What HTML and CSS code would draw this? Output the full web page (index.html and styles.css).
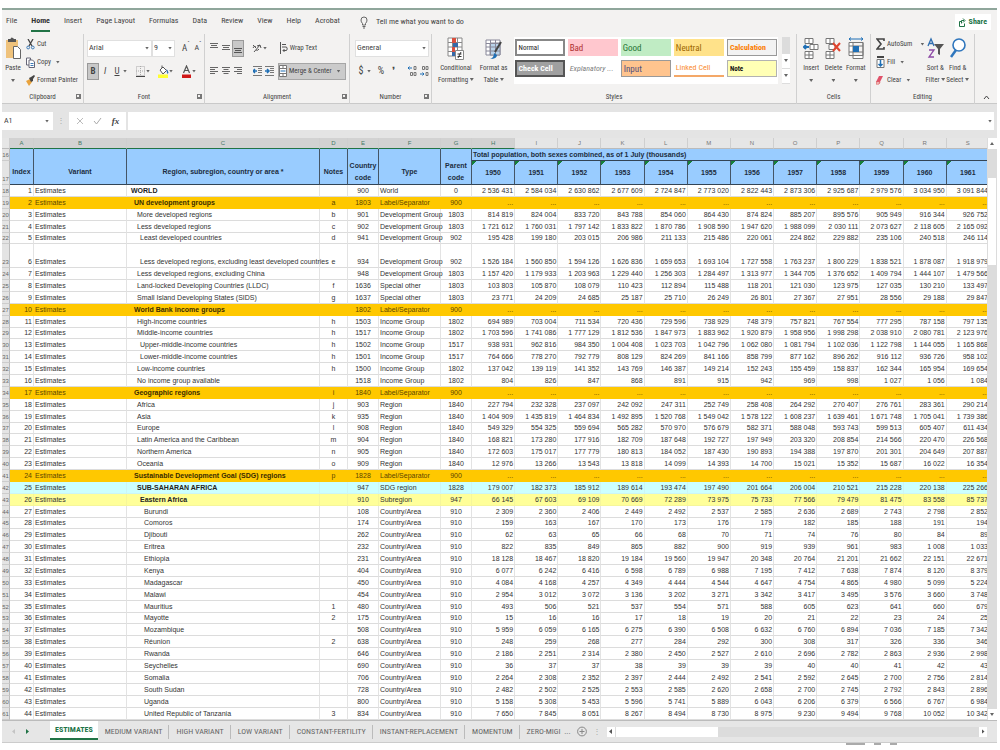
FILE: index.html
```html
<!DOCTYPE html>
<html lang="en">
<head>
<meta charset="utf-8">
<title>Population estimates</title>
<link rel="stylesheet" href="styles.css">
</head>
<body>
<div class="app">
<header class="ribbon">
  <nav class="menu">
    <button class="menu-tab">File</button>
    <button class="menu-tab active">Home</button>
    <button class="menu-tab">Insert</button>
    <button class="menu-tab">Page Layout</button>
    <button class="menu-tab">Formulas</button>
    <button class="menu-tab">Data</button>
    <button class="menu-tab">Review</button>
    <button class="menu-tab">View</button>
    <button class="menu-tab">Help</button>
    <button class="menu-tab">Acrobat</button>
    <button class="tell"><svg width="8" height="13" viewBox="0 0 8 13" fill="none" stroke="#666"><path d="M2.5 9V7.5Q1 6 1 4a3 3 0 0 1 6 0Q7 6 5.500 7.500V9zM2.500 10.500h3M3 12h2"/></svg>Tell me what you want to do</button>
    <button class="share"><svg width="7" height="9" viewBox="0 0 7 9" fill="none" stroke="#217346"><path d="M2 3.500H.5v5h5v-3M2.500 5.500V2.500H5M4 .5l2 2-2 2"/></svg>Share</button>
  </nav>
  <div class="groups">
    <section class="group">
      <div class="group-body clip">
        <button class="big"><svg width="16" height="24" viewBox="0 0 16 24"><path fill="#efc27b" d="M1 3h12v18H1z"/><path fill="#555" d="M3 2h2.500Q6-.5 8 1l1 1h2v3H3z"/><path fill="#fff" stroke="#666" d="M8.500 9.500h4l3 3v9h-7z"/></svg>Paste<i class="dd"></i></button>
        <div class="stack">
          <button class="row"><svg width="9" height="11" viewBox="0 0 9 11" fill="none"><path stroke="#444" stroke-width="1.300" d="M2 0l4 7M7 0L3 7"/><path stroke="#3b78b5" d="M.8 8.500a1.400 1.400 0 1 0 2.800 0 1.400 1.400 0 1 0-2.800 0M5.400 8.500a1.400 1.400 0 1 0 2.800 0 1.400 1.400 0 1 0-2.800 0"/></svg>Cut</button>
          <button class="row"><svg width="9" height="11" viewBox="0 0 9 11" fill="#fff" stroke="#667"><path d="M.5 1h4v7h-4z"/><path d="M3 3h3.500L8.500 5v5.500H3z"/><path stroke="#3b78b5" d="M4.500 6.500h3M4.500 8.500h3"/></svg>Copy <i class="dd"></i></button>
          <button class="row"><svg width="9" height="11" viewBox="0 0 9 11"><path fill="#e9a33d" d="M0 6l4-2 2 3-3 4z"/><path fill="#444" d="M3 3l2-1 3-2 1 1-2 3v2L5 7z"/></svg>Format Painter</button>
        </div>
      </div>
      <footer class="group-name">Clipboard<i class="launch"></i></footer>
    </section>
    <section class="group">
      <div class="group-body font">
        <div class="line">
          <span class="combo wide"><input aria-label="Font" value="Arial"><i class="dd"></i></span>
          <span class="combo"><input aria-label="Font size" value="9"><i class="dd"></i></span>
          <button class="tool grow">A<sup>ˆ</sup></button><button class="tool shrink">A<sup>ˇ</sup></button>
        </div>
        <div class="line">
          <button class="tool on bold">B</button><button class="tool ital">I</button><button class="tool under">U</button><i class="dd"></i>
          <button class="tool sep"><svg width="9" height="11" viewBox="0 0 9 11" fill="none" stroke="#aaa" stroke-dasharray="1 1"><path d="M.5.5h8v9h-8zM4.500 0v10M0 5h9"/><path stroke="#444" stroke-dasharray="none" d="M0 10.500h9"/></svg></button><i class="dd"></i>
          <button class="tool sep"><svg width="11" height="13" viewBox="0 0 11 13"><path fill="#fff" stroke="#555" d="M2 5l3-3 3.500 3.500L5 9zM4 3V.5"/><path fill="#2f6eb0" d="M8.500 4q3 3 1 5-1-1-1-5"/><path fill="#ff3" d="M0 9.500h10V13H0z"/></svg></button><i class="dd"></i>
          <button class="tool sep"><svg width="9" height="13" viewBox="0 0 9 13"><path fill="none" stroke="#555" stroke-width="1.200" d="M1.500 8l3-7 3 7M2.500 5.500h4"/><path fill="#d01818" d="M0 9.500h9V13H0z"/></svg></button><i class="dd"></i>
        </div>
      </div>
      <footer class="group-name">Font<i class="launch"></i></footer>
    </section>
    <section class="group">
      <div class="group-body align">
        <div class="line">
          <button class="tool"><svg width="8" height="12" viewBox="0 0 8 12" stroke="#666"><path d="M0 1.500h8M1 3.500h6M0 5.500h8"/></svg></button>
          <button class="tool"><svg width="8" height="12" viewBox="0 0 8 12" stroke="#666"><path d="M0 3.500h8M1 5.500h6M0 7.500h8"/></svg></button>
          <button class="tool on"><svg width="8" height="12" viewBox="0 0 8 12" stroke="#555"><path d="M0 6.500h8M1 8.500h6M0 10.500h8"/></svg></button>
          <button class="tool sep"><svg width="10" height="12" viewBox="0 0 10 12" fill="none" stroke="#555"><path d="M2 10L8 3M8 3l1 3M8 3L5 4M1 3l3 3M1 6q1-3 3-1M4 8q2 1 3-1"/></svg></button><i class="dd"></i>
          <button class="row wrap"><svg width="8" height="12" viewBox="0 0 8 12" fill="none" stroke="#555"><path d="M.5 0v12M2 2.500h4M2 5h4.500q1.500 2 0 3.500H3M4.500 7L3 8.500 4.500 10"/></svg>Wrap Text</button>
        </div>
        <div class="line">
          <button class="tool"><svg width="8" height="10" viewBox="0 0 8 10" stroke="#666"><path d="M0 1.500h8M0 3.500h5M0 5.500h8M0 7.500h5"/></svg></button>
          <button class="tool"><svg width="8" height="10" viewBox="0 0 8 10" stroke="#666"><path d="M0 1.500h8M1.500 3.500h5M0 5.500h8M1.500 7.500h5"/></svg></button>
          <button class="tool"><svg width="8" height="10" viewBox="0 0 8 10" stroke="#666"><path d="M0 1.500h8M3 3.500h5M0 5.500h8M3 7.500h5"/></svg></button>
          <button class="tool sep"><svg width="9" height="12" viewBox="0 0 9 12" stroke="#777"><path d="M0 1.500h9M5 3.500h4M5 5.500h4M5 7.500h4M0 10.500h9"/><path stroke="#1f6fb5" stroke-width="1.500" fill="none" d="M4 6H0M2 4L0 6l2 2"/></svg></button>
          <button class="tool"><svg width="9" height="12" viewBox="0 0 9 12" stroke="#777"><path d="M0 1.500h9M5 3.500h4M5 5.500h4M5 7.500h4M0 10.500h9"/><path stroke="#1f6fb5" stroke-width="1.500" fill="none" d="M0 6h4M2 4l2 2-2 2"/></svg></button>
          <button class="row merge"><svg width="8" height="12" viewBox="0 0 8 12" fill="#fff" stroke="#777"><path d="M.5.5h7v11h-7zM.5 3.500h7M.5 8.500h7M4 .5v3M4 8.500v3"/><path stroke="#1f6fb5" d="M1.500 6h5"/></svg>Merge &amp; Center <i class="dd"></i></button>
        </div>
      </div>
      <footer class="group-name">Alignment<i class="launch"></i></footer>
    </section>
    <section class="group">
      <div class="group-body number">
        <div class="line"><span class="combo full"><input aria-label="Number format" value="General"><i class="dd"></i></span></div>
        <div class="line">
          <button class="tool sign">$</button><i class="dd"></i><button class="tool sign percent">%</button><button class="tool sign">❜</button>
          <button class="tool sep"><svg width="9" height="12" viewBox="0 0 9 12" fill="none" stroke="#777"><path stroke="#1f6fb5" d="M4 3H0M1.500 1.500L0 3l1.500 1.500"/><path d="M6 1.500h2v3H6zM2.500 7.500h2v3h-2zM6 7.500h2v3H6z"/></svg></button>
          <button class="tool"><svg width="9" height="12" viewBox="0 0 9 12" fill="none" stroke="#777"><path stroke="#1f6fb5" d="M0 9h4M2.500 7.500L4 9l-1.500 1.500"/><path d="M2.500 1.500h2v3h-2zM6 1.500h2v3H6zM6 7.500h2v3H6z"/></svg></button>
        </div>
      </div>
      <footer class="group-name">Number<i class="launch"></i></footer>
    </section>
    <section class="group">
      <div class="group-body styles">
        <button class="big"><svg width="17" height="24" viewBox="0 0 17 24" fill="#fff" stroke="#888"><path d="M1 1h14v18H1zM1 5.500h14M1 10h14M1 14.500h14M5.500 1v18M10.500 1v18"/><path fill="#d9503f" stroke="none" d="M5 1h4v5H5zM5 10h3v5H5z"/><path fill="#3669a8" stroke="none" d="M6 6h5v4H6zM5 15h5v4H5z"/><path d="M8.500 13.500h8v9h-8z"/><path stroke="#333" d="M10.500 17h4M10.500 19.500h4M14 15l-3 6"/></svg><span>Conditional<br>Formatting <i class="dd"></i></span></button>
        <button class="big"><svg width="17" height="24" viewBox="0 0 17 24" fill="#fff" stroke="#889"><path d="M1 3h14v15H1z"/><path fill="#b9d3ea" d="M5 6h10v12H5z"/><path d="M1 6.500h14M1 10h14M1 14h14M5.500 3v15M10.500 3v15"/><path stroke="#444" stroke-width="2" d="M16 5l-6 10"/><path fill="#1f6fb5" stroke="none" d="M5 22q4-1 4-6l3 2q0 4-7 4"/></svg><span>Format as<br>Table <i class="dd"></i></span></button>
        <div class="gallery">
          <button class="cs normal">Normal</button><button class="cs bad">Bad</button><button class="cs good">Good</button><button class="cs neutral">Neutral</button><button class="cs calc">Calculation</button>
          <button class="cs check">Check Cell</button><button class="cs expl">Explanatory ...</button><button class="cs input">Input</button><button class="cs linked">Linked Cell</button><button class="cs note">Note</button>
        </div>
        <div class="spin"><button aria-label="Scroll up"></button><button aria-label="Scroll down"><i class="dd"></i></button><button aria-label="More"><i class="dd"></i></button></div>
      </div>
      <footer class="group-name">Styles</footer>
    </section>
    <section class="group">
      <div class="group-body cells">
        <button class="big"><svg width="16" height="24" viewBox="0 0 16 24" fill="#fff" stroke="#777"><path d="M2 1.500h8v5H2zM6 1.500v5M2 14.500h8v7H2zM6 14.500v7M2 18h8M7 7.500h8v5H7zM11 7.500v5"/><path stroke="#1f6fb5" stroke-width="2" d="M6 10H1M3 8l-2 2 2 2"/></svg>Insert<i class="dd"></i></button>
        <button class="big"><svg width="16" height="24" viewBox="0 0 16 24" fill="#fff" stroke="#777"><path d="M1 1.500h8v5H1zM5 1.500v5M1 14.500h8v7H1zM5 14.500v7M1 18h8M4 7.500h6v5H4z"/><path stroke="#e0452f" stroke-width="2" d="M8 6l7 8M15 6l-7 8"/></svg>Delete<i class="dd"></i></button>
        <button class="big"><svg width="16" height="24" viewBox="0 0 16 24" fill="#fff" stroke="#777"><path d="M1 5.500h14v13H1zM1 9h14M1 15h14M5 5.500v16h10v-16"/><path fill="#1f6fb5" stroke="none" d="M5 9h6v6H5z"/><path stroke="#1f6fb5" d="M1 2h14M3 .5L1 2l2 1.500M13 .5L15 2l-2 1.500"/></svg>Format<i class="dd"></i></button>
      </div>
      <footer class="group-name">Cells</footer>
    </section>
    <section class="group">
      <div class="group-body edit">
        <div class="stack">
          <button class="row"><svg width="9" height="12" viewBox="0 0 9 12" fill="none" stroke="#444" stroke-width="1.600"><path d="M8 3V1H1l4 5-4 5h7V9"/></svg>AutoSum &nbsp;<i class="dd"></i></button>
          <button class="row"><svg width="9" height="12" viewBox="0 0 9 12" fill="#fff" stroke="#777"><path d="M1 3.500h7v8H1z"/><path stroke="#444" stroke-width="2" d="M1 1h7"/><path fill="none" stroke="#1f6fb5" stroke-width="1.500" d="M4.500 4v6M2.500 8l2 2 2-2"/></svg>Fill <i class="dd"></i></button>
          <button class="row"><svg width="9" height="12" viewBox="0 0 9 12"><path fill="#e0526a" d="M0 8l3-6h4L4 8z"/><path fill="#fff" stroke="#d66" d="M0 8h4l-1 2H0z"/></svg>Clear <i class="dd"></i></button>
        </div>
        <button class="big"><svg width="17" height="24" viewBox="0 0 17 24" fill="none"><path stroke="#2f6eb0" stroke-width="1.300" d="M1 9l3-7 3 7M2 6.500h4"/><path stroke="#8d4aa5" stroke-width="1.300" d="M2 13h5l-5 7h5"/><path fill="#555" d="M7 7h10l-4 5v6l-2-1v-5z"/></svg><span>Sort &amp;<br>Filter <i class="dd"></i></span></button>
        <button class="big"><svg width="16" height="24" viewBox="0 0 16 24" fill="#fff" stroke="#2f76bd" stroke-width="1.600"><circle cx="9" cy="8" r="6"/><path stroke-width="2.500" d="M6 13l-5 7"/></svg><span>Find &amp;<br>Select <i class="dd"></i></span></button>
      </div>
      <footer class="group-name">Editing</footer>
    </section>
    <button class="collapse" aria-label="Collapse ribbon"><svg width="7" height="5" viewBox="0 0 7 5" fill="none" stroke="#444"><path d="M1 4l2.500-3L6 4"/></svg></button>
  </div>
</header>
<div class="formula">
  <span class="name-box"><input aria-label="Name box" value="A1"><i class="dd"></i></span>
  <span class="grip">⋮</span>
  <span class="fx"><svg width="8" height="8" viewBox="0 0 8 8" stroke="#bbb"><path d="M1 1l6 6M7 1L1 7"/></svg><svg width="9" height="8" viewBox="0 0 9 8" fill="none" stroke="#aaa"><path d="M1 4l2.500 3L8 1"/></svg><b>fx</b></span>
  <span class="entry"><input aria-label="Formula"><i class="dd"></i></span>
</div>
<main class="sheet">
  <div class="view">
    <table class="grid">
      <colgroup><col class="w-row"><col class="w-a"><col class="w-b"><col class="w-c"><col class="w-d"><col class="w-e"><col class="w-f"><col class="w-g"><col span="12"></colgroup>
      <thead id="head"></thead>
      <tbody id="body"></tbody>
    </table>
  </div>
  <div class="vbar"><button aria-label="Up"><i class="dd up"></i></button><span class="vthumb"></span><button aria-label="Down"><i class="dd"></i></button></div>
</main>
<footer class="tabs">
  <div class="arrows"><i class="prev"></i><i class="next"></i></div>
  <button class="tab current">ESTIMATES</button>
  <button class="tab">MEDIUM VARIANT</button>
  <button class="tab">HIGH VARIANT</button>
  <button class="tab">LOW VARIANT</button>
  <button class="tab">CONSTANT-FERTILITY</button>
  <button class="tab">INSTANT-REPLACEMENT</button>
  <button class="tab">MOMENTUM</button>
  <button class="tab last">ZERO-MIGI &nbsp;...</button>
  <button class="add" aria-label="New sheet"><svg width="10" height="11" viewBox="0 0 10 11" fill="none" stroke="#888"><circle cx="5" cy="5.500" r="4.400"/><path d="M5 3v5M2.500 5.500h5"/></svg></button>
  <span class="grip">⋮</span>
  <div class="hbar"><button aria-label="Left"><i class="prev dark"></i></button><span class="hthumb"></span><button aria-label="Right"><i class="next grey"></i></button></div>
</footer>
<div class="status"><i></i><i></i><i></i></div>
</div>
<script src="grid.js"></script>
</body>
</html>
```
FILE: styles.css
```css
* { box-sizing: border-box; }
body { margin: 0; background: #fff; color: #444; font: 8px/10px "Roboto Condensed", Roboto, sans-serif; }
button, input { font: inherit; color: inherit; background: none; border: 0; padding: 0; margin: 0; white-space: nowrap; }
input { min-width: 0; width: 100%; }
svg { flex: none; display: block; }
.app { display: flex; flex-direction: column; height: 100vh; padding: 8px 3px 0 2px; }
.dd { display: inline-block; flex: none; width: 4px; height: 3px; background: #666; clip-path: polygon(0 0, 100% 0, 50% 100%); vertical-align: 1px; }
.up { transform: rotate(180deg); }

.ribbon { background: #f3f2f1; border-top: 2px solid #8fa69b; border-bottom: 1px solid #c9c9c9; }
.menu { display: flex; align-items: center; height: 24px; padding: 0 6px 0 4px; gap: 14px; }
.menu-tab { height: 20px; border-bottom: 2px solid transparent; }
.menu-tab.active { font-weight: bold; color: #333; border-color: #217346; }
.tell { display: flex; align-items: center; gap: 8px; padding-left: 6px; }
.share { display: flex; align-items: center; gap: 3px; margin-left: auto; height: 16px; padding: 0 4px; background: #fff; color: #217346; font-weight: bold; }
.groups { display: grid; grid-template-columns: 82px 121px 145px 82px 1fr 74px 104px 22px; height: 69px; }
.group { display: flex; flex-direction: column; border-right: 1px solid #d0d0d0; min-width: 0; }
.group-body { flex: 1; display: flex; min-height: 0; }
.group-name { display: flex; justify-content: center; align-items: center; position: relative; height: 14px; font-size: 7px; }
.launch { position: absolute; right: 2px; top: 4px; width: 5px; height: 5px; border: 1px solid #777; border-right-width: 2px; border-bottom-width: 2px; }
.big { display: flex; flex-direction: column; align-items: center; gap: 1px; line-height: 12px; padding-top: 3px; }
.big > .dd { margin-top: 4px; }
.big, .row { font-size: 7px; }
.stack { display: flex; flex-direction: column; gap: 6px; padding-top: 4px; }
.row { display: flex; align-items: center; gap: 2px; height: 12px; }
.row .dd { margin-left: 3px; }
.clip { gap: 5px; padding-left: 3px; }
.line { display: flex; align-items: center; height: 18px; }
.font, .align, .number { flex-direction: column; gap: 5px; padding-top: 5px; }
.combo { display: flex; align-items: center; background: #fff; border: 1px solid #e0e0e0; width: 23px; height: 17px; padding: 0 2px 0 1px; }
.wide { width: 65px; }
.full { width: 74px; }
.font { padding-left: 3px; }
.tool { display: flex; align-items: center; justify-content: center; min-width: 12px; height: 17px; }
.tool sup { font-size: 6px; line-height: 6px; align-self: flex-start; }
.grow { margin-left: 5px; font-size: 9px; }
.on { background: #c8c8c8; border: 1px solid #999; }
.bold { font-weight: bold; font-size: 9px; }
.ital { font-style: italic; font-size: 9px; }
.under { text-decoration: underline; font-size: 9px; }
.sep { margin-left: 7px; }
.align { padding-left: 3px; }
.wrap { margin-left: auto; padding-right: 32px; }
.merge { margin-left: auto; width: 68px; height: 17px; background: #cbcbcb; border: 1px solid #a6a6a6; margin-right: 3px; }
.number { padding-left: 5px; }
.sign { font-size: 10px; }
.percent { margin-left: 4px; }
.styles { padding: 0 6px 0 6px; gap: 6px; }
.gallery { flex: 1; display: grid; grid-template-columns: repeat(5, 1fr); grid-template-rows: 17px 17px; gap: 4px 3px; background: #fff; margin: 3px 0 6px; padding: 2px 1px; min-width: 0; align-content: start; }
.cs { text-align: left; padding-left: 2px; overflow: hidden; font-size: 9px; }
.normal { border: 2px solid #888; color: #222; font-size: 7px; }
.bad { background: #ffc7ce; color: #b03030; }
.good { background: #c0ecc4; color: #267334; }
.neutral { background: #ffe28a; color: #9c6500; }
.calc { border: 1px solid #999; background: #f2f2f2; color: #fa7d00; font-weight: bold; font-size: 8px; }
.check { background: #a0a0a0; border: 2px solid #555; color: #fff; font-weight: bold; font-size: 8px; }
.expl { font-style: italic; color: #7f7f7f; font-size: 8px; }
.input { background: #ffc48e; border: 1px solid #999; color: #53507c; }
.linked { border-bottom: 2px solid #f4a868; color: #fa8d30; font-size: 8px; }
.note { border: 1px solid #b2b2b2; background: #ffffb5; color: #111; font-size: 7px; font-weight: bold; }
.spin { display: flex; flex-direction: column; width: 8px; margin: 3px 0 6px -2px; background: #fff; }
.spin button { height: 15px; border-bottom: 1px solid #ddd; }
.spin button:first-child { background: #dcdcdc; height: 17px; }
.cells { padding: 0 3px; justify-content: space-around; }
.cells .big { width: 22px; }
.edit { padding: 0 5px; justify-content: space-between; }
.edit .stack { margin-right: auto; }
.edit .big { width: 23px; }
.collapse { align-self: end; justify-self: center; padding-bottom: 4px; }

.formula { display: flex; background: #e4e4e4; padding: 8px 3px 8px 0; height: 34px; }
.formula > span { display: flex; align-items: center; background: #fff; }
.formula .grip { width: 16px; justify-content: center; background: none; color: #aaa; }
.name-box { width: 51px; padding: 0 4px 0 2px; }
.fx { width: 57px; justify-content: space-around; padding: 0 2px; font-family: "Liberation Serif", serif; font-style: italic; font-size: 9px; }
.entry { flex: 1; margin-left: 2px; padding-right: 2px; }

.sheet { flex: 1; display: flex; min-height: 0; }
.view { flex: 1; overflow: hidden; min-width: 0; }
.grid { table-layout: fixed; width: calc(100% + 3px); height: 100%; border-collapse: separate; border-spacing: 0; color: #333; font-family: "Liberation Sans", Arial, sans-serif; font-size: 7px; }
.w-row { width: 8px; } .w-a { width: 24px; } .w-b { width: 93px; } .w-c { width: 193px; } .w-d { width: 28px; } .w-e { width: 31px; } .w-f { width: 62px; } .w-g { width: 31px; }
.grid th, .grid td { padding: 0 1px; white-space: nowrap; line-height: 10px; }
.grid td { border-right: 1px solid #e3e3e3; border-bottom: 1px solid #dcdcdc; text-align: center; vertical-align: bottom; }
.grid .letters th { height: 11px; font-size: 6px; font-weight: normal; color: #777; background: #e6e6e6; border-right: 1px solid #cfcfcf; border-bottom: 1px solid #bbb; }
.grid .letters .sel { background: #d2d2d2; border-bottom: 1px solid #217346; color: #476; }
.grid .num { background: #e4e4e4; border-right: 1px solid #bbb; border-bottom: 1px solid #ccc; padding: 0; font-size: 6px; font-weight: normal; color: #666; vertical-align: bottom; }
.grid .band { height: 12px; }
.grid .years { height: 24px; }
.grid .blue { background: #99ccff; border-right: 1px solid #456; border-bottom: 1px solid #345; color: #1c2c40; vertical-align: bottom; line-height: 12px; }
.grid .mid { padding-bottom: 6px; }
.grid .total { text-align: left; vertical-align: middle; line-height: 10px; }
.grid .year { vertical-align: middle; background: linear-gradient(135deg, #17803a 3px, #99ccff 3px); }
.grid .right { text-align: right; }
.grid .left { text-align: left; }
.grid .l0 { padding-left: 4px; } .grid .l1 { padding-left: 7px; } .grid .l2 { padding-left: 10px; } .grid .l3 { padding-left: 13px; } .grid .l4 { padding-left: 17px; }
.grid .strong { font-weight: bold; color: #222; }
.grid .tall td { padding-top: 11px; }
.grid .gold td { background: #ffc800; border-color: #ffc800; color: #5c4600; }
.grid .gold .strong { color: #3a2c00; }
.grid .aqua td { background: #ccffff; border-color: #ccf5f5; }
.grid .lemon td { background: #ffff99; border-color: #f6f69a; }
.vbar { width: 10px; display: flex; flex-direction: column; align-items: center; background: #dcdcdc; }
.vbar button { width: 9px; height: 11px; background: #fff; display: grid; place-items: center; }
.vthumb { width: 8px; height: 15%; background: #fff; margin: 29px 0 auto; }

.tabs { display: flex; align-items: center; height: 23px; background: #e6e6e6; border-top: 1px solid #bbb; border-bottom: 1px solid #ccc; color: #666; }
.arrows { width: 48px; display: flex; gap: 11px; padding-left: 10px; }
.prev, .next { display: block; width: 3px; height: 5px; background: #c4c4c4; clip-path: polygon(0 0, 100% 50%, 0 100%); }
.prev { clip-path: polygon(100% 0, 0 50%, 100% 100%); }
.next { background: #217346; }
.dark, .grey { background: #555; }
.tab { padding: 0 6px 0 7px; height: 14px; border-right: 1px solid #bbb; }
.current { align-self: flex-start; height: 19px; padding: 0 5px; background: #fff; color: #217346; font-weight: bold; border-right: 0; border-bottom: 2px solid #217346; }
.last { border-right: 0; padding-right: 6px; }
.tabs .grip { width: 20px; text-align: center; color: #aaa; }
.hbar { flex: 1; display: flex; align-items: center; background: #dcdcdc; margin-right: 10px; }
.hbar button { width: 8px; height: 10px; background: #fff; display: grid; place-items: center; }
.hthumb { width: 27%; height: 10px; background: #fff; margin: 0 auto 0 1px; }
.status { display: flex; gap: 9px; height: 7px; justify-content: flex-end; padding-right: 100px; }
.status i { width: 7px; height: 2px; background: #aaa; }
.status i:first-child { width: 19px; }
```
FILE: grid.js
```js
const groups = {
  W: "World", L: "Label/Separator", D: "Development Group", S: "Special other",
  I: "Income Group", R: "Region", G: "SDG region", U: "Subregion", C: "Country/Area"
};
// name | indent | note | code | type | parent | values
const rows = `WORLD|0||900|W|0|2 536 431,2 584 034,2 630 862,2 677 609,2 724 847,2 773 020,2 822 443,2 873 306,2 925 687,2 979 576,3 034 950,3 091 844
UN development groups|1|a|1803|L|900|
More developed regions|2|b|901|D|1803|814 819,824 004,833 720,843 788,854 060,864 430,874 824,885 207,895 576,905 949,916 344,926 752
Less developed regions|2|c|902|D|1803|1 721 612,1 760 031,1 797 142,1 833 822,1 870 786,1 908 590,1 947 620,1 988 099,2 030 111,2 073 627,2 118 605,2 165 092
Least developed countries|3|d|941|D|902|195 428,199 180,203 015,206 986,211 133,215 486,220 061,224 862,229 882,235 106,240 518,246 114
Less developed regions, excluding least developed countries|3|e|934|D|902|1 526 184,1 560 850,1 594 126,1 626 836,1 659 653,1 693 104,1 727 558,1 763 237,1 800 229,1 838 521,1 878 087,1 918 979
Less developed regions, excluding China|2||948|D|1803|1 157 420,1 179 933,1 203 963,1 229 440,1 256 303,1 284 497,1 313 977,1 344 705,1 376 652,1 409 794,1 444 107,1 479 566
Land-locked Developing Countries (LLDC)|2|f|1636|S|1803|103 803,105 870,108 079,110 423,112 894,115 488,118 201,121 030,123 975,127 035,130 210,133 497
Small Island Developing States (SIDS)|2|g|1637|S|1803|23 771,24 209,24 685,25 187,25 710,26 249,26 801,27 367,27 951,28 556,29 188,29 847
World Bank income groups|1||1802|L|900|
High-income countries|2|h|1503|I|1802|694 989,703 004,711 534,720 436,729 596,738 929,748 379,757 821,767 554,777 295,787 158,797 135
Middle-income countries|2|h|1517|I|1802|1 703 596,1 741 086,1 777 129,1 812 536,1 847 973,1 883 962,1 920 879,1 958 956,1 998 298,2 038 910,2 080 781,2 123 976
Upper-middle-income countries|3|h|1502|I|1517|938 931,962 816,984 350,1 004 408,1 023 703,1 042 796,1 062 080,1 081 794,1 102 036,1 122 798,1 144 055,1 165 868
Lower-middle-income countries|3|h|1501|I|1517|764 666,778 270,792 779,808 129,824 269,841 166,858 799,877 162,896 262,916 112,936 726,958 102
Low-income countries|2|h|1500|I|1802|137 042,139 119,141 352,143 769,146 387,149 214,152 243,155 459,158 837,162 344,165 954,169 654
No income group available|2||1518|I|1802|804,826,847,868,891,915,942,969,998,1 027,1 056,1 084
Geographic regions|1|i|1840|L|900|
Africa|2|j|903|R|1840|227 794,232 328,237 097,242 092,247 311,252 749,258 408,264 292,270 407,276 761,283 361,290 214
Asia|2|k|935|R|1840|1 404 909,1 435 819,1 464 834,1 492 895,1 520 768,1 549 042,1 578 122,1 608 237,1 639 461,1 671 748,1 705 041,1 739 386
Europe|2|l|908|R|1840|549 329,554 325,559 694,565 282,570 970,576 679,582 371,588 048,593 743,599 513,605 407,611 434
Latin America and the Caribbean|2|m|904|R|1840|168 821,173 280,177 916,182 709,187 648,192 727,197 949,203 320,208 854,214 566,220 470,226 568
Northern America|2|n|905|R|1840|172 603,175 017,177 779,180 813,184 052,187 430,190 893,194 388,197 870,201 301,204 649,207 887
Oceania|2|o|909|R|1840|12 976,13 266,13 543,13 818,14 099,14 393,14 700,15 021,15 352,15 687,16 022,16 354
Sustainable Development Goal (SDG) regions|1|p|1828|L|900|
SUB-SAHARAN AFRICA|2||947|G|1828|179 007,182 373,185 912,189 614,193 474,197 490,201 664,206 004,210 521,215 228,220 138,225 266
Eastern Africa|3||910|U|947|66 145,67 603,69 109,70 669,72 289,73 975,75 733,77 566,79 479,81 475,83 558,85 737
Burundi|4||108|C|910|2 309,2 360,2 406,2 449,2 492,2 537,2 585,2 636,2 689,2 743,2 798,2 852
Comoros|4||174|C|910|159,163,167,170,173,176,179,182,185,188,191,194
Djibouti|4||262|C|910|62,63,65,66,68,70,71,74,76,80,84,89
Eritrea|4||232|C|910|822,835,849,865,882,900,919,939,961,983,1 008,1 033
Ethiopia|4||231|C|910|18 128,18 467,18 820,19 184,19 560,19 947,20 348,20 764,21 201,21 662,22 151,22 671
Kenya|4||404|C|910|6 077,6 242,6 416,6 598,6 789,6 988,7 195,7 412,7 638,7 874,8 120,8 379
Madagascar|4||450|C|910|4 084,4 168,4 257,4 349,4 444,4 544,4 647,4 754,4 865,4 980,5 099,5 224
Malawi|4||454|C|910|2 954,3 012,3 072,3 136,3 202,3 271,3 342,3 417,3 495,3 576,3 660,3 748
Mauritius|4|1|480|C|910|493,506,521,537,554,571,588,605,623,641,660,679
Mayotte|4|2|175|C|910|15,16,16,17,18,19,20,21,22,23,24,25
Mozambique|4||508|C|910|5 959,6 059,6 165,6 275,6 390,6 508,6 632,6 760,6 894,7 036,7 185,7 342
Réunion|4|2|638|C|910|248,259,268,277,284,292,300,308,317,326,336,346
Rwanda|4||646|C|910|2 186,2 251,2 314,2 380,2 450,2 527,2 610,2 696,2 782,2 863,2 936,2 998
Seychelles|4||690|C|910|36,37,37,38,39,39,39,40,40,41,42,43
Somalia|4||706|C|910|2 264,2 308,2 352,2 397,2 444,2 492,2 541,2 592,2 645,2 700,2 756,2 814
South Sudan|4||728|C|910|2 482,2 502,2 525,2 553,2 585,2 620,2 658,2 700,2 745,2 792,2 843,2 896
Uganda|4||800|C|910|5 158,5 308,5 453,5 596,5 741,5 889,6 043,6 206,6 379,6 566,6 767,6 984
United Republic of Tanzania|4|3|834|C|910|7 650,7 845,8 051,8 267,8 494,8 730,8 975,9 230,9 494,9 768,10 052,10 342`.split("\n");

const tint = { L: "gold", G: "aqua", U: "lemon" };
const letters = [..."ABCDEFGHIJKLMNOPQRS"];
const years = letters.slice(7).map((_, i) => 1950 + i);

document.getElementById("head").innerHTML =
  `<tr class="letters"><th></th>${letters.map((c, i) => `<th class="${i < 8 ? "sel" : ""}">${c}</th>`).join("")}</tr>
  <tr><th class="num band">16</th>${["Index", "Variant", "Region, subregion, country or area *", "Notes", "Country<br>code", "Type", "Parent<br>code"]
    .map(t => `<th rowspan="2" class="blue ${t.includes("<br>") ? "" : "mid"}">${t}</th>`).join("")}
  <th class="blue band total" colspan="12">Total population, both sexes combined, as of 1 July (thousands)</th></tr>
  <tr><th class="num years">17</th>${years.map(y => `<th class="blue years year">${y}</th>`).join("")}</tr>`;

document.getElementById("body").innerHTML = rows.map((line, i) => {
  const [name, level, note, code, type, parent, list] = line.split("|");
  const values = list ? list.split(",") : years.map(() => "...");
  const strong = i === 0 || tint[type] ? "strong" : "";
  return `<tr class="${tint[type] || ""} ${i === 5 ? "tall" : ""}"><th class="num">${i + 18}</th><td class="right">${i + 1}</td>
  <td class="left">Estimates</td><td class="left l${level} ${strong}">${name}</td><td>${note}</td><td>${code}</td>
  <td class="left">${groups[type]}</td><td>${parent}</td>${values.map(v => `<td class="right">${v}</td>`).join("")}</tr>`;
}).join("");
```
